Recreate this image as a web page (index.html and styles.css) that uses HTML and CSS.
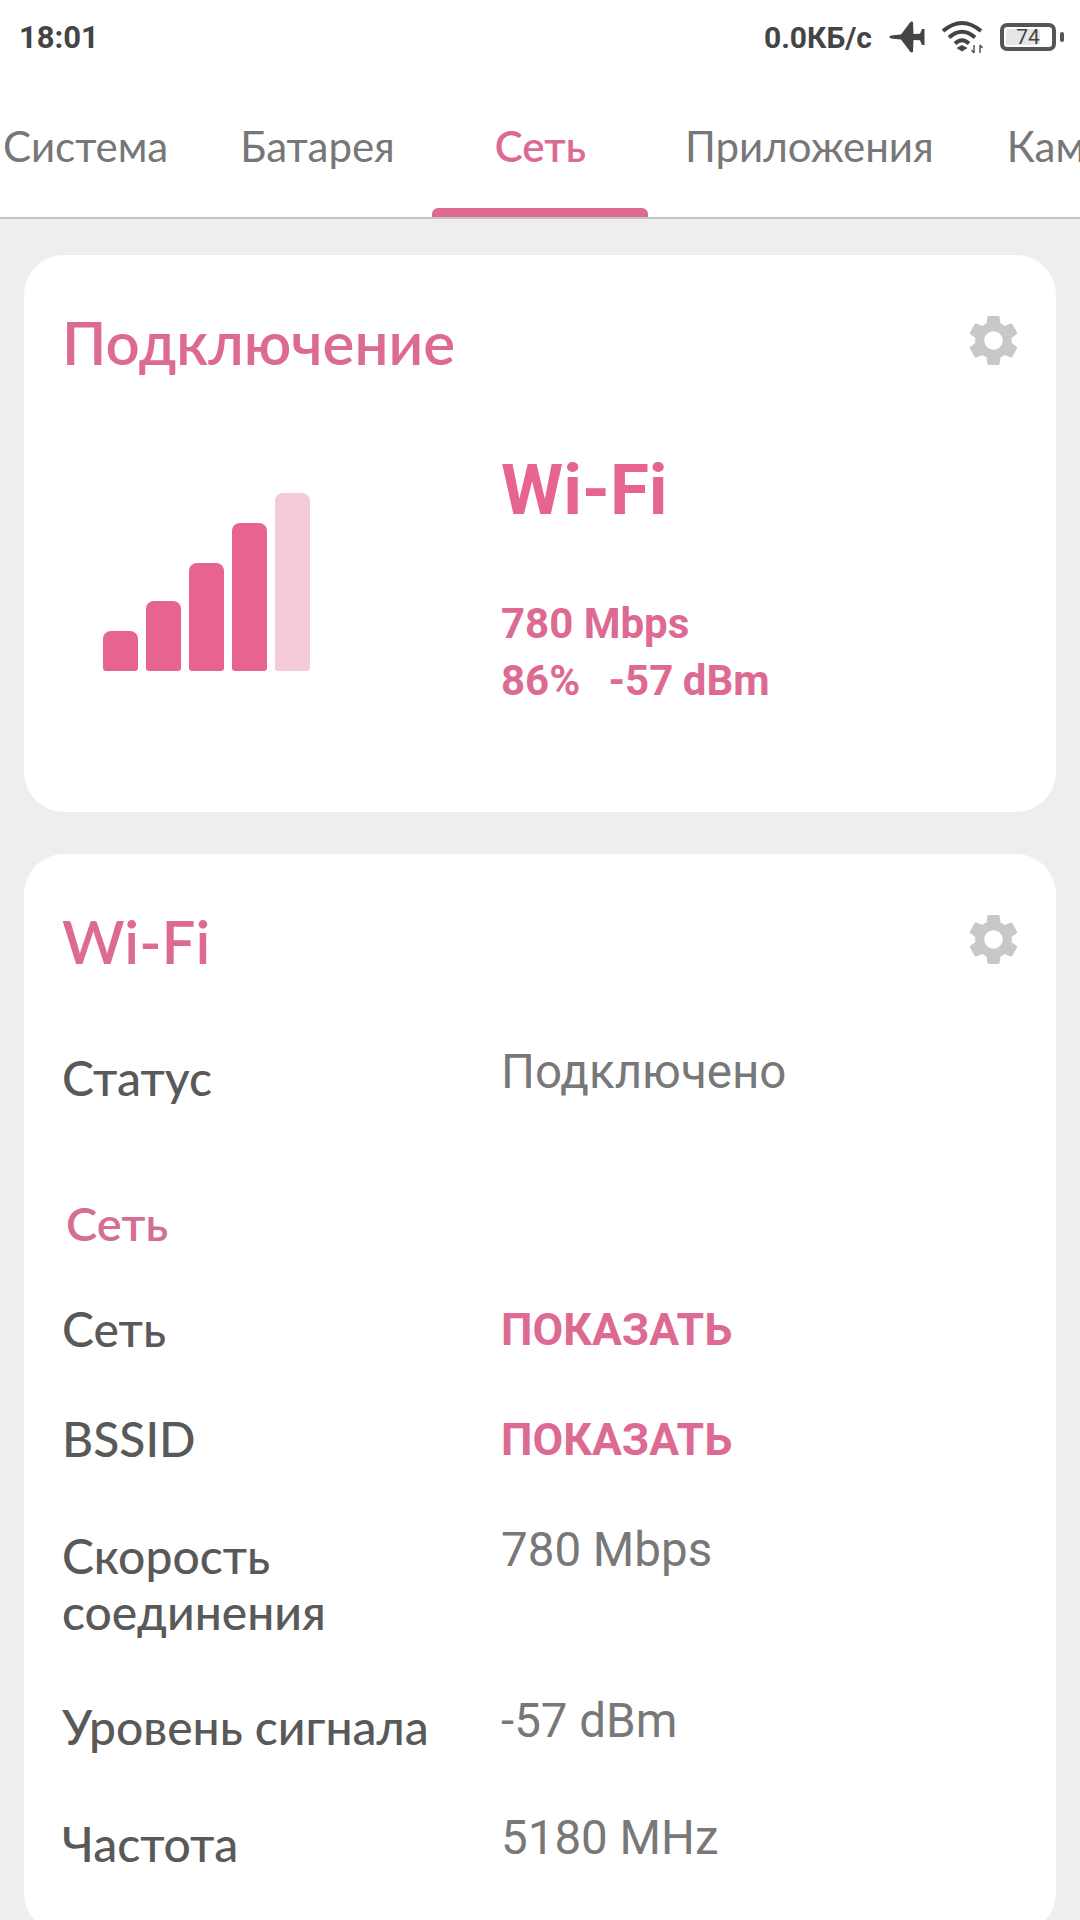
FILE: index.html
```html
<!DOCTYPE html>
<html lang="ru">
<head>
    <meta charset="UTF-8">
    <meta name="viewport" content="width=device-width, initial-scale=1.0">
    <title>Сеть</title>
    <link rel="stylesheet" href="styles.css">
</head>
<body>
    <div class="statusbar">
        <span class="clock">18:01</span>
        <div class="status-right">
            <span class="speed">0.0КБ/с</span>
            <svg class="ic-plane" viewBox="0 0 36 32" width="36" height="32">
                <path d="M0 16 Q1 14.500 4 14.300 L12 13.500 L21 1.500 Q22.500 0 24 1 L24.500 13 L31 12.800 L33 8 L35.500 8 L35.500 24 L33 24 L31 19.200 L24.500 19 L24 31 Q22.500 32 21 30.500 L12 18.500 L4 17.700 Q1 17.500 0 16 Z" fill="#444"/>
            </svg>
            <svg class="ic-wifi" viewBox="0 0 44 34" width="44" height="34">
                <path d="M2 11 Q21 -5 40 11" fill="none" stroke="#444" stroke-width="4"/>
                <path d="M8 17.500 Q21 6 34 17.500" fill="none" stroke="#444" stroke-width="4"/>
                <path d="M14 23.500 Q21 17 28 23.500" fill="none" stroke="#444" stroke-width="4"/>
                <path d="M15.500 28 L21 25 L26.500 28 L21 31.500 Z" fill="#444"/>
                <path d="M33 25 V33 M30.500 30 L33 33 M39 33 V25 M39 25 L41.500 28" fill="none" stroke="#555" stroke-width="1.500"/>
            </svg>
            <div class="battery">
                <div class="battery-body">
                    <div class="battery-fill"></div>
                    <span class="battery-num">74</span>
                </div>
                <div class="battery-tip"></div>
            </div>
        </div>
    </div>

    <div class="tabs">
        <span class="tab tab-1">Система</span>
        <span class="tab tab-2">Батарея</span>
        <span class="tab tab-3 active">Сеть</span>
        <span class="tab tab-4">Приложения</span>
        <span class="tab tab-5">Камера</span>
    </div>

    <div class="content">
        <div class="card card-conn">
            <div class="card-head">
                <h2>Подключение</h2>
                <svg class="gear" viewBox="0 0 24 24" width="61" height="61"><path d="M19.140 12.940c.040-.3.060-.610.060-.940 0-.320-.020-.640-.070-.940l2.030-1.580c.180-.140.230-.410.120-.610l-1.920-3.320c-.120-.220-.370-.290-.590-.220l-2.390.960c-.500-.380-1.030-.700-1.620-.940l-.360-2.540c-.040-.240-.240-.410-.480-.410h-3.840c-.240 0-.430.170-.470.410l-.360 2.540c-.590.240-1.130.570-1.620.940l-2.390-.960c-.220-.080-.470 0-.590.220L2.740 8.870c-.120.210-.080.470.120.610l2.030 1.580c-.050.300-.090.630-.090.940s.020.640.07.940l-2.030 1.580c-.180.140-.230.410-.120.610l1.920 3.320c.120.220.370.290.590.220l2.390-.960c.500.380 1.030.700 1.620.940l.360 2.540c.050.240.240.410.480.410h3.840c.240 0 .440-.170.470-.410l.360-2.540c.590-.240 1.130-.560 1.620-.940l2.390.960c.220.080.470 0 .590-.220l1.920-3.320c.120-.220.070-.470-.120-.610l-2.010-1.580zM12 15.600c-1.980 0-3.600-1.620-3.600-3.600s1.620-3.600 3.600-3.600 3.600 1.620 3.600 3.600-1.620 3.600-3.600 3.600z" fill="#c8c8c8"/></svg>
            </div>
            <div class="conn-body">
                <div class="bars">
                    <div class="bar bar-1"></div>
                    <div class="bar bar-2"></div>
                    <div class="bar bar-3"></div>
                    <div class="bar bar-4"></div>
                    <div class="bar bar-5"></div>
                </div>
                <div class="conn-info">
                    <div class="conn-title">Wi-Fi</div>
                    <div class="conn-line conn-speed">780 Mbps</div>
                    <div class="conn-line conn-signal">86%&nbsp;&nbsp; -57 dBm</div>
                </div>
            </div>
        </div>

        <div class="card card-wifi">
            <div class="card-head">
                <h2>Wi-Fi</h2>
                <svg class="gear" viewBox="0 0 24 24" width="61" height="61"><path d="M19.140 12.940c.040-.3.060-.610.060-.940 0-.320-.020-.640-.070-.940l2.030-1.580c.180-.140.230-.410.120-.610l-1.920-3.320c-.120-.220-.370-.290-.590-.220l-2.390.960c-.500-.380-1.030-.700-1.620-.940l-.360-2.540c-.040-.240-.240-.410-.480-.410h-3.840c-.240 0-.430.170-.470.410l-.360 2.540c-.590.240-1.130.570-1.620.940l-2.390-.960c-.220-.080-.470 0-.590.220L2.740 8.870c-.120.210-.080.470.120.610l2.030 1.580c-.050.300-.090.630-.090.940s.020.640.07.940l-2.030 1.580c-.180.140-.230.410-.120.610l1.920 3.320c.120.220.370.290.590.220l2.390-.960c.500.380 1.030.700 1.620.940l.360 2.540c.050.240.240.410.480.410h3.840c.240 0 .440-.170.470-.410l.360-2.540c.590-.240 1.130-.560 1.620-.940l2.390.960c.220.080.470 0 .590-.220l1.920-3.320c.120-.220.070-.470-.120-.610l-2.010-1.580zM12 15.600c-1.980 0-3.600-1.620-3.600-3.600s1.620-3.600 3.600-3.600 3.600 1.620 3.600 3.600-1.620 3.600-3.600 3.600z" fill="#c8c8c8"/></svg>
            </div>
            <div class="row row-status">
                <div class="label">Статус</div>
                <div class="value">Подключено</div>
            </div>
            <div class="section">Сеть</div>
            <div class="row row-net">
                <div class="label">Сеть</div>
                <div class="action">ПОКАЗАТЬ</div>
            </div>
            <div class="row row-bssid">
                <div class="label">BSSID</div>
                <div class="action">ПОКАЗАТЬ</div>
            </div>
            <div class="row row-speed">
                <div class="label">Скорость соединения</div>
                <div class="value">780 Mbps</div>
            </div>
            <div class="row row-signal">
                <div class="label">Уровень сигнала</div>
                <div class="value">-57 dBm</div>
            </div>
            <div class="row row-freq">
                <div class="label">Частота</div>
                <div class="value">5180 MHz</div>
            </div>
        </div>
    </div>
</body>
</html>
```

FILE: styles.css
```css
html, body {
    margin: 0;
    padding: 0;
}
body {
    width: 1080px;
    height: 1920px;
    overflow: hidden;
    background-color: #eeeeee;
    font-family: Lato, sans-serif;
}

.statusbar {
    height: 74px;
    background-color: #fff;
    display: flex;
    justify-content: space-between;
    align-items: center;
    padding: 0 16px 0 19px;
}
.clock, .speed {
    font-family: Roboto, sans-serif;
    font-weight: 700;
    color: #444;
}
.clock {
    font-size: 31px;
}
.speed {
    font-size: 30px;
    margin-right: 17px;
}
.status-right {
    display: flex;
    align-items: center;
}
.ic-plane {
    margin-right: 16px;
}
.ic-wifi {
    margin-right: 15px;
}
.battery {
    display: flex;
    align-items: center;
}
.battery-body {
    position: relative;
    width: 48px;
    height: 20px;
    border: 4px solid #555;
    border-radius: 7px;
    display: flex;
    justify-content: center;
    align-items: center;
}
.battery-fill {
    position: absolute;
    left: 2px;
    top: 2px;
    bottom: 2px;
    width: 34px;
    border-radius: 3px;
    background-color: #e6e6e6;
}
.battery-num {
    position: relative;
    font-family: Roboto, sans-serif;
    font-size: 21px;
    color: #444;
}
.battery-tip {
    width: 4px;
    height: 10px;
    margin-left: 4px;
    border-radius: 2px;
    background-color: #555;
}

.tabs {
    position: relative;
    height: 143px;
    background-color: #fff;
    border-bottom: 2px solid #c4c4c4;
    display: flex;
    align-items: flex-start;
    white-space: nowrap;
    overflow: hidden;
}
.tab {
    margin-top: 48px;
    font-size: 42px;
    line-height: 48px;
    color: #777;
}
.tab-1 { margin-left: 3px; }
.tab-2 { margin-left: 72px; }
.tab-3 { margin-left: 100px; }
.tab-4 { margin-left: 99px; }
.tab-5 { margin-left: 73px; }
.tab.active {
    color: #dc6a93;
    font-weight: 600;
}
.tab.active::after {
    content: "";
    position: absolute;
    left: 432px;
    bottom: 0;
    width: 216px;
    height: 9px;
    background-color: #dc6a93;
    border-radius: 6px 6px 0 0;
}

.content {
    padding: 36px 24px 0;
}
.card {
    background-color: #fff;
    border-radius: 40px;
    margin-bottom: 42px;
    padding: 0 32px 0 38px;
}
.card-conn {
    height: 557px;
}
.card-wifi {
    height: 1079px;
}
.card-head {
    display: flex;
    justify-content: space-between;
    align-items: center;
    height: 180px;
}
.card-head h2 {
    margin: -6px 0 0;
    font-size: 60px;
    font-weight: 600;
    color: #dc6a93;
}
.gear {
    margin-top: -10px;
}

.conn-body {
    display: flex;
}
.bars {
    width: 439px;
    height: 180px;
    margin-top: 56px;
    padding-left: 41px;
    box-sizing: border-box;
    display: flex;
    gap: 8px;
    align-items: flex-end;
}
.bar {
    width: 35px;
    border-radius: 8px 8px 3px 3px;
    background-color: #e6648f;
}
.bar-1 { height: 40px; }
.bar-2 { height: 70px; }
.bar-3 { height: 108px; }
.bar-4 { height: 148px; }
.bar-5 { height: 178px; background-color: #f5cbda; }
.conn-info {
    margin-top: 15px;
}
.conn-title {
    font-family: Roboto, sans-serif;
    font-weight: 700;
    font-size: 71px;
    line-height: 80px;
    color: #e6648f;
    margin-bottom: 65px;
}
.conn-line {
    font-family: Roboto, sans-serif;
    font-weight: 700;
    font-size: 42px;
    line-height: 57px;
    color: #dc6a93;
}
.conn-signal {
    word-spacing: -1px;
}

.row {
    display: grid;
    grid-template-columns: 439px 1fr;
    font-size: 48px;
    line-height: 56px;
}
.label {
    color: #595959;
    font-weight: 500;
    margin-top: -1px;
}
.value {
    font-family: Roboto, sans-serif;
    font-size: 47.500px;
    color: #787878;
    margin-top: -7px;
}
.action {
    font-family: Roboto, sans-serif;
    font-weight: 700;
    font-size: 44.500px;
    color: #dc6a93;
}
.section {
    font-size: 47px;
    line-height: 52px;
    color: #d66e94;
    font-weight: 600;
    margin: 91px 0 53px 4px;
}
.row-status { margin-top: 17px; }
.row-net { height: 110px; }
.row-bssid { height: 117px; }
.row-speed { height: 171px; }
.row-signal { height: 117px; }
.row-speed .label { width: 380px; }
```
